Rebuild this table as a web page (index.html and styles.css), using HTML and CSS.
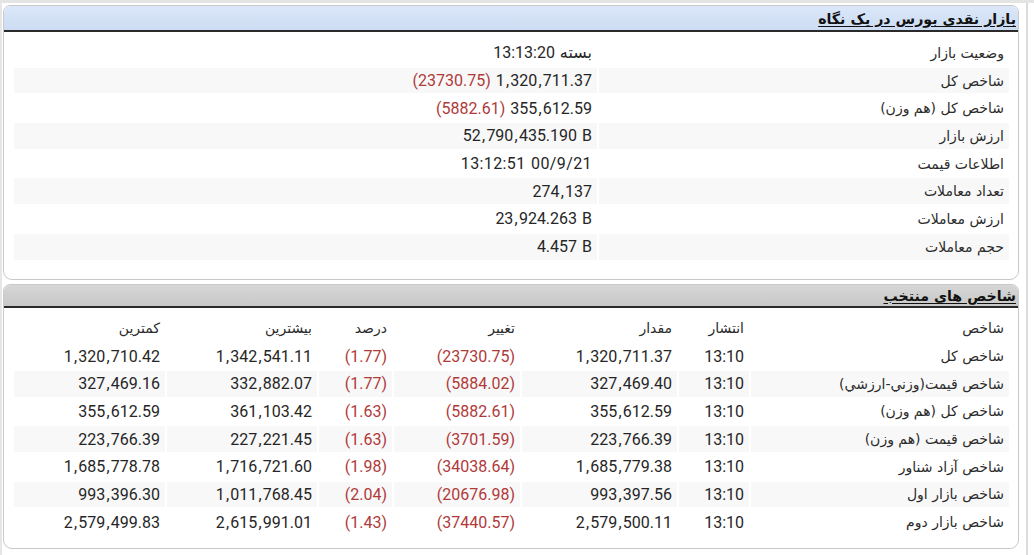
FILE: index.html
```html
<!DOCTYPE html>
<html lang="fa">
<head>
<meta charset="utf-8">
<title>بازار نقدی بورس در یک نگاه</title>
<link rel="stylesheet" href="styles.css">
</head>
<body>
<div class="page">
  <div class="content">
    <section class="panel">
      <h2 class="panel-head blue">بازار نقدی بورس در یک نگاه</h2>
      <table class="grid summary" dir="rtl">
        <colgroup><col class="c-label"><col></colgroup>
        <tbody>
          <tr><td class="lbl">وضعیت بازار</td><td class="val">13:13:20 بسته</td></tr>
          <tr><td class="lbl">شاخص کل</td><td class="val"><span class="neg">(23730.75)</span> 1<span class="c">,</span>320<span class="c">,</span>711.37</td></tr>
          <tr><td class="lbl">شاخص کل (هم وزن)</td><td class="val"><span class="neg">(5882.61)</span> 355<span class="c">,</span>612.59</td></tr>
          <tr><td class="lbl">ارزش بازار</td><td class="val">52<span class="c">,</span>790<span class="c">,</span>435.190 B</td></tr>
          <tr><td class="lbl">اطلاعات قیمت</td><td class="val wide">13:12:51 00/9/21</td></tr>
          <tr><td class="lbl">تعداد معاملات</td><td class="val">274<span class="c">,</span>137</td></tr>
          <tr><td class="lbl">ارزش معاملات</td><td class="val">23<span class="c">,</span>924.263 B</td></tr>
          <tr><td class="lbl">حجم معاملات</td><td class="val">4.457 B</td></tr>
        </tbody>
      </table>
    </section>

    <section class="panel panel-second">
      <h2 class="panel-head gray">شاخص های منتخب</h2>
      <table class="grid indices" dir="rtl">
        <colgroup>
          <col class="w-name"><col class="w-time"><col class="w-value"><col class="w-change"><col class="w-pct"><col class="w-high"><col class="w-low">
        </colgroup>
        <thead>
          <tr><th>شاخص</th><th>انتشار</th><th>مقدار</th><th>تغییر</th><th>درصد</th><th>بیشترین</th><th>کمترین</th></tr>
        </thead>
        <tbody>
          <tr><td class="lbl">شاخص کل</td><td class="num">13:10</td><td class="num">1<span class="c">,</span>320<span class="c">,</span>711.37</td><td class="num neg">(23730.75)</td><td class="num neg">(1.77)</td><td class="num">1<span class="c">,</span>342<span class="c">,</span>541.11</td><td class="num">1<span class="c">,</span>320<span class="c">,</span>710.42</td></tr>
          <tr><td class="lbl">شاخص قیمت(وزني-ارزشي)</td><td class="num">13:10</td><td class="num">327<span class="c">,</span>469.40</td><td class="num neg">(5884.02)</td><td class="num neg">(1.77)</td><td class="num">332<span class="c">,</span>882.07</td><td class="num">327<span class="c">,</span>469.16</td></tr>
          <tr><td class="lbl">شاخص کل (هم وزن)</td><td class="num">13:10</td><td class="num">355<span class="c">,</span>612.59</td><td class="num neg">(5882.61)</td><td class="num neg">(1.63)</td><td class="num">361<span class="c">,</span>103.42</td><td class="num">355<span class="c">,</span>612.59</td></tr>
          <tr><td class="lbl">شاخص قیمت (هم وزن)</td><td class="num">13:10</td><td class="num">223<span class="c">,</span>766.39</td><td class="num neg">(3701.59)</td><td class="num neg">(1.63)</td><td class="num">227<span class="c">,</span>221.45</td><td class="num">223<span class="c">,</span>766.39</td></tr>
          <tr><td class="lbl">شاخص آزاد شناور</td><td class="num">13:10</td><td class="num">1<span class="c">,</span>685<span class="c">,</span>779.38</td><td class="num neg">(34038.64)</td><td class="num neg">(1.98)</td><td class="num">1<span class="c">,</span>716<span class="c">,</span>721.60</td><td class="num">1<span class="c">,</span>685<span class="c">,</span>778.78</td></tr>
          <tr><td class="lbl">شاخص بازار اول</td><td class="num">13:10</td><td class="num">993<span class="c">,</span>397.56</td><td class="num neg">(20676.98)</td><td class="num neg">(2.04)</td><td class="num">1<span class="c">,</span>011<span class="c">,</span>768.45</td><td class="num">993<span class="c">,</span>396.30</td></tr>
          <tr><td class="lbl">شاخص بازار دوم</td><td class="num">13:10</td><td class="num">2<span class="c">,</span>579<span class="c">,</span>500.11</td><td class="num neg">(37440.57)</td><td class="num neg">(1.43)</td><td class="num">2<span class="c">,</span>615<span class="c">,</span>991.01</td><td class="num">2<span class="c">,</span>579<span class="c">,</span>499.83</td></tr>
        </tbody>
      </table>
    </section>
  </div>
</div>
</body>
</html>
```
FILE: styles.css
```css
html, body {
  margin: 0;
  padding: 0;
  background: #ffffff;
}

body {
  font-family: Roboto, "DejaVu Sans", sans-serif;
  font-size: 16px;
  color: #262626;
}

.page {
  width: 1034px;
  height: 555px;
  box-sizing: border-box;
  border-top: 3px solid #e4e4e4;
  border-left: 2px solid #e6e6e6;
  display: flex;
}

.content {
  width: 1017px;
  padding-top: 2px;
  padding-left: 1px;
  box-sizing: border-box;
  margin-right: 7px;
  display: flex;
  flex-direction: column;
  gap: 4px;
}

.page::after {
  content: "";
  width: 2px;
  background: #dcdcdc;
}

.panel {
  border: 1px solid #c9c9c9;
  border-radius: 7px 7px 9px 9px;
  background: #fff;
  padding-bottom: 17px;
}

.panel-second {
  padding-bottom: 11px;
}

.panel-head {
  margin: 0;
  direction: rtl;
  text-align: right;
  font-family: "DejaVu Sans", sans-serif;
  font-size: 14.2px;
  font-weight: bold;
  color: #111;
  border-bottom: 2px solid #2a2a2a;
  border-radius: 6px 6px 0 0;
  padding: 0 2px 0 0;
  text-decoration: underline;
  text-underline-offset: 2px;
}

.panel-head.blue {
  height: 24px;
  line-height: 26px;
  background: linear-gradient(#dbe7f9, #cddcf3);
}

.panel-head.gray {
  height: 21px;
  line-height: 23px;
  background: linear-gradient(#d6d6d6, #c8c8c8);
}

.grid {
  border-collapse: separate;
  border-spacing: 2px;
  table-layout: fixed;
  width: 999px;
  margin: 6px 0 0 8px;
}

.grid td, .grid th {
  height: 25.7px;
  padding: 0 5px 0 5px;
  box-sizing: border-box;
  white-space: nowrap;
  overflow: hidden;
  vertical-align: middle;
}

.grid tbody tr:nth-child(even) td {
  background: #f8f8f8;
}

.lbl, .grid th {
  text-align: right;
  font-family: "DejaVu Sans", sans-serif;
  font-size: 14px;
  font-weight: normal;
  color: #2b2b2b;
}

.summary .c-label {
  width: 410px;
}

.val {
  direction: ltr;
  text-align: right;
  word-spacing: 1px;
}

.val.wide {
  letter-spacing: 0.4px;
}

.num {
  direction: ltr;
  text-align: right;
}

.c {
  padding: 0 1.2px;
}

.neg {
  color: #b03a3a;
}

.w-name { width: 258px; }
.w-time { width: 70px; }
.w-value { width: 155px; }
.w-change { width: 126px; }
.w-pct { width: 73px; }
.w-high { width: 150px; }
.w-low { width: 151px; }
```
